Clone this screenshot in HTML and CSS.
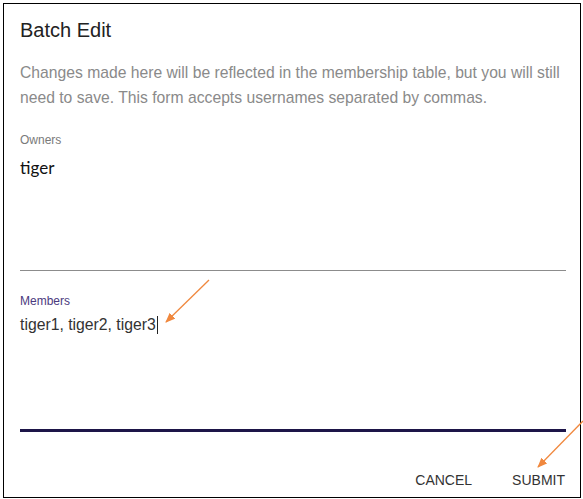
FILE: index.html
```html
<!DOCTYPE html>
<html>
<head>
<meta charset="utf-8">
<link rel="stylesheet" href="styles.css">
</head>
<body>
<div class="frame">
  <h1 class="title">Batch Edit</h1>
  <p class="desc">Changes made here will be reflected in the membership table, but you will still need to save. This form accepts usernames separated by commas.</p>
  <div class="field owners">
    <div class="label">Owners</div>
    <div class="value owners-value">tiger</div>
  </div>
  <div class="field members">
    <div class="label members-label">Members</div>
    <div class="value members-value">tiger1, tiger2, tiger3<span class="caret"></span></div>
  </div>
  <div class="actions">
    <span class="btn">CANCEL</span>
    <span class="btn">SUBMIT</span>
  </div>
</div>
<svg class="arrows" width="583" height="499" viewBox="0 0 583 499">
  <defs>
    <marker id="head" markerWidth="10" markerHeight="8" refX="9" refY="4" orient="auto" markerUnits="userSpaceOnUse">
      <path d="M0,0 L10,4 L0,8 Z" fill="#f0883e"/>
    </marker>
  </defs>
  <line x1="209" y1="280" x2="166" y2="322" stroke="#f0883e" stroke-width="1.3" marker-end="url(#head)"/>
  <line x1="583" y1="421" x2="538" y2="467" stroke="#f0883e" stroke-width="1.3" marker-end="url(#head)"/>
</svg>
</body>
</html>
```

FILE: styles.css
```css
html, body {
  margin: 0;
  padding: 0;
  background: #fff;
}
body {
  width: 583px;
  height: 499px;
  position: relative;
  overflow: hidden;
  font-family: "Liberation Sans", Arial, sans-serif;
}
.frame {
  margin: 3px 0 0 3px;
  width: 578px;
  height: 495px;
  border: 1px solid #000;
  box-sizing: border-box;
  padding: 14px 14px 0 16px;
  display: flex;
  flex-direction: column;
}
.title {
  margin: 0;
  font-size: 20px;
  font-weight: normal;
  line-height: 24px;
  color: #222;
}
.desc {
  margin: 18px 0 0 0;
  font-size: 15.7px;
  line-height: 25px;
  color: #8a8a8a;
}
.field {
  box-sizing: border-box;
}
.owners {
  margin-top: 22px;
  height: 139px;
  border-bottom: 1px solid #8c8c8c;
}
.members {
  margin-top: 22px;
  height: 139px;
  border-bottom: 3px solid #1d1548;
}
.label {
  font-size: 12px;
  line-height: 16px;
  color: #7a7a7a;
}
.members-label {
  color: #4b3a7e;
}
.owners-value {
  margin-top: 8px;
  font-family: Lato, "Open Sans", sans-serif;
  font-size: 17px;
  line-height: 24px;
  color: #111;
}
.members-value {
  margin-top: 6px;
  font-size: 15.75px;
  line-height: 20px;
  color: #333;
  display: flex;
  align-items: center;
}
.caret {
  display: inline-block;
  width: 1px;
  height: 18px;
  background: #222;
  margin-left: 1px;
}
.actions {
  margin-top: 38px;
  display: flex;
  justify-content: flex-end;
  gap: 40px;
  padding-right: 1px;
}
.btn {
  font-size: 14px;
  line-height: 20px;
  color: #333;
}
.arrows {
  position: absolute;
  left: 0;
  top: 0;
}
```
